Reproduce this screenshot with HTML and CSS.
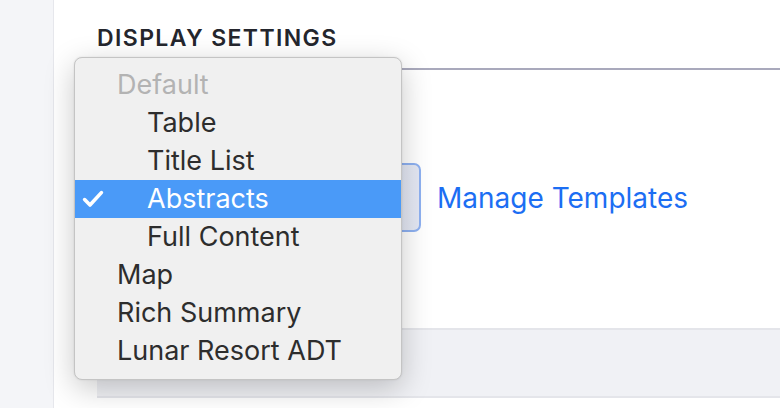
FILE: index.html
```html
<!DOCTYPE html>
<html>
<head>
<meta charset="utf-8">
<link rel="stylesheet" href="styles.css">
</head>
<body>
<div class="page">
  <aside class="sidebar"></aside>
  <main class="main">
    <section class="panel">
      <h2 class="title">DISPLAY SETTINGS</h2>
      <div class="row">
        <div class="select"></div>
        <a class="link" href="#">Manage Templates</a>
      </div>
    </section>
    <div class="footer-box"></div>
    <ul class="menu">
      <li class="item group">Default</li>
      <li class="item sub">Table</li>
      <li class="item sub">Title List</li>
      <li class="item sub selected"><svg class="check" viewBox="0 0 22 18" width="22" height="18"><path d="M2.6 9.6 L8 15 L19.4 2.6" fill="none" stroke="#fff" stroke-width="3.6" stroke-linecap="round" stroke-linejoin="round"/></svg>Abstracts</li>
      <li class="item sub">Full Content</li>
      <li class="item">Map</li>
      <li class="item">Rich Summary</li>
      <li class="item">Lunar Resort ADT</li>
    </ul>
  </main>
</div>
</body>
</html>
```

FILE: styles.css
```css
html, body {
  margin: 0;
  padding: 0;
  background: #ffffff;
  font-family: Inter, "Open Sans", "Liberation Sans", sans-serif;
}
.page {
  display: flex;
  width: 780px;
  height: 408px;
  overflow: hidden;
}
.sidebar {
  width: 53px;
  flex: none;
  background: #f4f5f8;
  border-right: 1px solid #e6e7ec;
}
.main {
  position: relative;
  flex: 1;
  padding-left: 43px;
  display: flex;
  flex-direction: column;
}
.title {
  margin: 25px 0 0 0;
  font-size: 23px;
  line-height: 27px;
  font-weight: 600;
  letter-spacing: 1.4px;
  color: #24262d;
  padding-bottom: 16px;
  border-bottom: 2px solid #a9a9bc;
  white-space: nowrap;
}
.row {
  display: flex;
  align-items: center;
  margin-top: 93px;
}
.select {
  width: 320px;
  height: 65px;
  border: 2px solid #8eb1f1;
  border-radius: 7px;
  background: linear-gradient(90deg, #eef1f8, #e4e8f4);
}
.link {
  margin-left: 16px;
  font-size: 28px;
  color: #1c6ef3;
  text-decoration: none;
}
.footer-box {
  margin-top: 96px;
  height: 66px;
  background: #f0f1f5;
  border-top: 2px solid #e4e5ea;
  border-bottom: 2px solid #e4e5ea;
}
.menu {
  position: absolute;
  left: 20px;
  top: 57px;
  width: 326px;
  margin: 0;
  padding: 8px 0 9px 0;
  list-style: none;
  background: #f0f0f0;
  border: 1px solid #c4c4c4;
  border-radius: 8px;
  box-shadow: 0 8px 30px rgba(0, 0, 0, 0.22), 0 0 2px rgba(0, 0, 0, 0.1);
}
.item {
  position: relative;
  height: 38px;
  line-height: 38px;
  padding-left: 42px;
  font-size: 27px;
  color: #2d2d2d;
  white-space: nowrap;
}
.item.sub {
  padding-left: 72px;
}
.item.group {
  color: #b3b3b3;
}
.item.selected {
  background: #4a9af8;
  color: #ffffff;
}
.check {
  position: absolute;
  left: 7px;
  top: 10px;
}
```
